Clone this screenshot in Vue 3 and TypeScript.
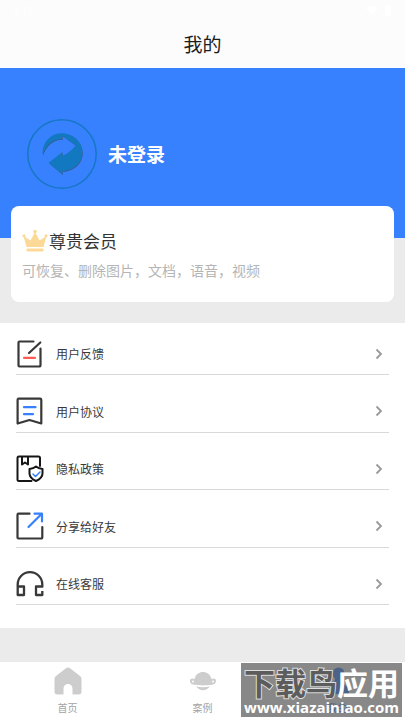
<script setup lang="ts">
type IconName = 'feedback' | 'terms' | 'privacy' | 'share' | 'support'

interface MenuEntry {
  label: string
  icon: IconName
}

const entries: MenuEntry[] = [
  { label: '用户反馈', icon: 'feedback' },
  { label: '用户协议', icon: 'terms' },
  { label: '隐私政策', icon: 'privacy' },
  { label: '分享给好友', icon: 'share' },
  { label: '在线客服', icon: 'support' },
]
</script>

<template>
  <div class="page">
    <header class="top">
      <div class="status">
        <span>3:18</span>
        <svg class="status-icons" viewBox="0 0 28 12" aria-hidden="true">
          <path d="M1 4Q7-1 13 4L7 11Z" />
          <path d="M20 2h2V0h2v2h2v10h-6z" />
        </svg>
      </div>
      <h1>我的</h1>
    </header>

    <main class="content">
      <section class="profile">
        <button class="login" type="button">
          <svg class="avatar" viewBox="0 0 70 70" aria-hidden="true">
            <circle cx="35" cy="35" r="34.2" fill="none" stroke="#1677c5" stroke-width="1.5" />
            <path
              v-for="layer in ['shade', 'face']"
              :key="layer"
              :class="layer"
              d="M15.700 35.700C15 25 22 14.700 34 14.300 47 14 55.300 24 55.300 33.500 55.300 44 46 52 35.300 52V55.300L21.700 43.700 35.300 33V37C41 35 45 31 48.700 26.300L35.300 16.500V20C26 20 19 26 15.700 35.700Z"
            />
          </svg>
          <span>未登录</span>
        </button>
      </section>

      <section class="member">
        <h2>
          <svg class="crown" viewBox="0 0 26 24" aria-hidden="true">
            <g fill="#fdd997">
              <path d="M4.500 18 1.500 7 8.500 11.500 13 3 17.500 11.500 24.500 7 21.500 18Z" />
              <circle cx="13" cy="2.600" r="1.800" />
              <circle cx="2" cy="6.800" r="1.600" />
              <circle cx="24" cy="6.800" r="1.600" />
              <rect x="4.500" y="19.500" width="17" height="3" rx="1" />
            </g>
          </svg>
          尊贵会员
        </h2>
        <p>可恢复、删除图片，文档，语音，视频</p>
      </section>

      <ul class="menu">
        <li v-for="entry in entries" :key="entry.icon">
          <button class="row" type="button">
            <svg class="icon" viewBox="0 0 28 28" aria-hidden="true">
              <g v-if="entry.icon === 'feedback'" fill="none" stroke="#383838" stroke-width="2.2" stroke-linecap="round" stroke-linejoin="round">
                <path d="M17.500 1.500H3.500Q2.500 1.500 2.500 2.500V25.500Q2.500 26.500 3.500 26.500H23Q24.500 26.500 24.500 25V8.500M24.300 2.500 13 13" />
                <path d="M8 17.800h11" stroke="#ff5c53" />
              </g>
              <g v-else-if="entry.icon === 'terms'" fill="none" stroke="#383838" stroke-width="2.2" stroke-linecap="round" stroke-linejoin="round">
                <path d="M2.500 1.700H24Q25.300 1.700 25.300 3V26.500L13.500 23 1.600 26.500V3Q1.600 1.700 2.500 1.700Z" />
                <path d="M8 10.200h11.500M8 17.200h9" stroke="#3781fe" />
              </g>
              <g v-else-if="entry.icon === 'privacy'" fill="none" stroke="#161616" stroke-width="2" stroke-linecap="round" stroke-linejoin="round">
                <path d="M24 11V3Q24 1.500 22.500 1.500H3Q1.500 1.500 1.500 3V24.500Q1.500 26 3 26H15.500M6 2V9.500L9 7.500 12 9.500V2" />
                <path d="M20 11.500Q22.500 13.500 26.500 14V18.500Q26.500 23 20 26 13.500 23 13.500 18.500V14Q17.500 13.500 20 11.500Z" />
                <path d="m17 19 2.500 2.500 4.500-4.500" stroke="#3781fe" stroke-width="1.5" />
              </g>
              <g v-else-if="entry.icon === 'share'" fill="none" stroke="#383838" stroke-width="2.2" stroke-linecap="round" stroke-linejoin="round">
                <path d="M13.500 1.700H2.500Q1.500 1.700 1.500 2.700V25.500Q1.500 26.500 2.500 26.500H25Q26.300 26.500 26.300 25V15" />
                <path d="M12.500 15 25.500 2M18.500 1.700H26V9.500" stroke="#3781fe" />
              </g>
              <g v-else fill="none" stroke="#383838" stroke-width="2.300" stroke-linejoin="round">
                <path d="M1.700 17.500V14.500A12.200 12.200 0 0 1 26.300 14.500V17.500M1.700 16.500H8V25H1.700ZM26.800 16.500H20V25H26.300V21" />
              </g>
            </svg>
            <span class="label">{{ entry.label }}</span>
            <svg class="chevron" viewBox="0 0 8 12" aria-hidden="true">
              <path d="m1.500 1.500 4.500 4.500-4.500 4.500" fill="none" stroke="#999" stroke-width="1.800" />
            </svg>
          </button>
        </li>
      </ul>
    </main>

    <nav class="tabs">
      <a href="#home">
        <svg viewBox="0 0 30 30" aria-hidden="true">
          <path d="M15 1.500Q16 1.500 17 2.300L27 10Q28.500 11.200 28.500 13V25.500Q28.500 28.500 25.500 28.500H19.500V22.500A4.500 4.500 0 0 0 10.500 22.500V28.500H4.500Q1.500 28.500 1.500 25.500V13Q1.500 11.200 3 10L13 2.300Q14 1.500 15 1.500Z" fill="#cdcdcd" />
        </svg>
        <span>首页</span>
      </a>
      <a href="#cases">
        <svg viewBox="0 0 30 30" aria-hidden="true">
          <g fill="#cdcdcd">
            <path d="M6.500 13C8 8 11 6 15 6S22 8 23.500 13C28 11 29 15 27 17.500 25 20 5 20 3 17.500 1 15 2 11 6.500 13Z" />
            <path d="M8 20.500Q15 22 22 20.500 19 24.200 15 24.200T8 20.500Z" />
          </g>
          <circle cx="5" cy="15.500" r="1" fill="#fff" />
          <circle cx="25" cy="15.500" r="1" fill="#fff" />
        </svg>
        <span>案例</span>
      </a>
      <a href="#mine" class="active" aria-current="page">
        <svg viewBox="0 0 30 30" aria-hidden="true">
          <circle cx="15.500" cy="7.500" r="6" fill="#3781fe" />
          <path d="M12 12H19Q19 18 26 22V26Q26 28 24 28H7Q5 28 5 26V22Q12 18 12 12Z" fill="#3781fe" />
        </svg>
        <span>我的</span>
      </a>
      <div class="stamp">
        <strong><span class="dark">下载鸟</span>应用</strong>
        <b>www.xiazainiao.com</b>
      </div>
    </nav>
  </div>
</template>

<style>
body {
  margin: 0;
}
</style>

<style scoped>
.page {
  min-height: 100vh;
  display: flex;
  flex-direction: column;
  background: #ebebeb;
  font-family: "Noto Sans CJK SC", sans-serif;
}

h1,
h2,
p,
ul {
  margin: 0;
  padding: 0;
  font-weight: 400;
}

button {
  border: 0;
  padding: 0;
  background: none;
  font: inherit;
  text-align: left;
  cursor: pointer;
}

svg {
  display: block;
  flex: none;
}

.top {
  height: 68px;
  background: #fcfcfc;
}

.status {
  display: flex;
  justify-content: space-between;
  align-items: center;
  height: 20px;
  padding: 0 12px;
  font-size: 11px;
  color: #fff;
}

.status-icons {
  width: 28px;
  height: 12px;
  fill: #fff;
}

h1 {
  font-size: 19px;
  line-height: 48px;
  text-align: center;
  color: #1c1c1c;
}

.content {
  flex: 1;
}

.profile {
  height: 119px;
  padding: 51px 27px 0;
  background: #3781fe;
}

.login {
  display: flex;
  align-items: center;
  gap: 11px;
  font-size: 19px;
  line-height: 68px;
  font-weight: 700;
  color: #fff;
}

.avatar {
  width: 70px;
  height: 70px;
}

.shade {
  fill: #3a5c92;
  transform: translate(0.5px, 0.7px);
}

.face {
  fill: #1278c0;
}

.member {
  position: relative;
  margin: -32px 11px 21px;
  height: 73px;
  padding: 23px 11px 0;
  border-radius: 8px;
  background: #fff;
}

h2 {
  display: flex;
  align-items: center;
  gap: 1px;
  font-size: 17px;
  line-height: 24px;
  color: #333;
}

.crown {
  width: 26px;
  height: 24px;
}

.member p {
  margin-top: 6px;
  font-size: 14px;
  line-height: 22px;
  color: #b5b5b5;
}

.menu {
  display: flex;
  flex-direction: column;
  justify-content: space-between;
  height: 282px;
  padding: 0 16px 23px;
  background: #fff;
  list-style: none;
}

.row {
  display: flex;
  align-items: center;
  box-sizing: border-box;
  width: 100%;
  height: 52px;
  padding: 10px 6px 0 0;
  border-bottom: 1px solid #d9d9d9;
}

.icon {
  width: 28px;
  height: 28px;
}

.label {
  flex: 1;
  margin-left: 12px;
  font-size: 12px;
  color: #3a3a3a;
}

.chevron {
  width: 8px;
  height: 12px;
}

.tabs {
  position: relative;
  display: flex;
  height: 58px;
  background: #fff;
}

.tabs a {
  flex: 1;
  display: flex;
  flex-direction: column;
  align-items: center;
  padding-top: 4px;
  font-size: 10px;
  line-height: 16px;
  text-decoration: none;
  color: #a3a3a3;
}

.tabs svg {
  width: 30px;
  height: 30px;
  margin-bottom: 4px;
}

.tabs .active {
  color: #3781fe;
}

.stamp {
  position: absolute;
  right: 3px;
  bottom: 3px;
  display: flex;
  flex-direction: column;
  align-items: center;
  width: 161px;
  height: 54px;
  background: rgb(85 85 85 / 70%);
  color: #fff;
  white-space: nowrap;
}

.stamp strong {
  font-size: 31px;
  line-height: 38px;
  font-weight: 700;
}

.stamp .dark {
  color: #5c5c5c;
  -webkit-text-stroke: 2px #dcdcdc;
  paint-order: stroke fill;
}

.stamp b {
  font-family: "Open Sans", sans-serif;
  font-size: 15px;
  line-height: 12px;
}
</style>
